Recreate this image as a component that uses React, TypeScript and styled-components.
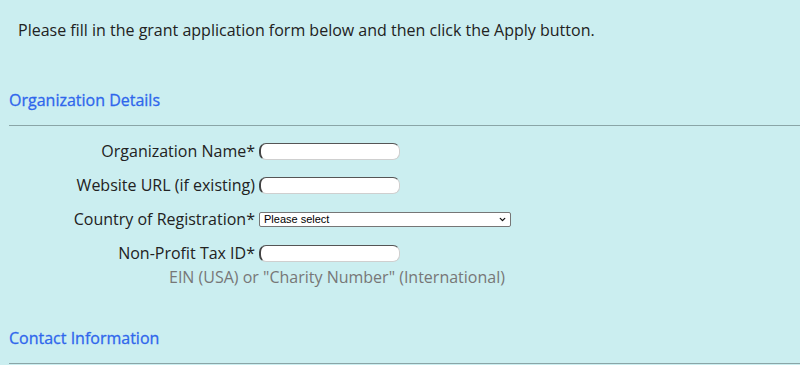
import React from "react";
import styled, { createGlobalStyle } from "styled-components";
import { ChevronDown } from "lucide-react";

const GlobalStyle = createGlobalStyle`
  html, body {
    margin: 0;
    padding: 0;
    background: #cbeef0;
  }
  body {
    font-family: "Open Sans", "DejaVu Sans", sans-serif;
    color: #222;
  }
`;

const Page = styled.div`
  padding: 18px 0 0 9px;
  width: 791px;
`;

const Intro = styled.p`
  margin: 0 0 0 9px;
  font-size: 16px;
  line-height: 24px;
`;

const SectionTitle = styled.h2<{ $top: number }>`
  margin: ${(p) => p.$top}px 0 0 0;
  font-size: 16px;
  font-weight: 400;
  line-height: 24px;
  color: #2f66ec;
  -webkit-text-stroke: 0.3px #2f66ec;
`;

const Rule = styled.hr`
  margin: 13px 0 0 0;
  border: none;
  border-top: 1px solid #8aa5a7;
`;

const Form = styled.div`
  display: flex;
  flex-direction: column;
  gap: 10px;
  margin-top: 13px;
`;

const Row = styled.div`
  display: grid;
  grid-template-columns: 246px auto;
  column-gap: 4px;
  align-items: center;
  height: 24px;
`;

const Label = styled.label`
  font-size: 16px;
  line-height: 24px;
  text-align: right;
  white-space: nowrap;
`;

const TextInput = styled.input`
  box-sizing: border-box;
  width: 141px;
  height: 17px;
  margin: 0;
  padding: 0 6px;
  background: #fff;
  border-style: solid;
  border-width: 1px 1px 1px 2px;
  border-top-color: #555;
  border-left-color: #444;
  border-right-color: #cfcfcf;
  border-bottom-color: #cfcfcf;
  border-radius: 7px;
  font-size: 12px;
  outline: none;
`;

const SelectWrap = styled.div`
  position: relative;
  width: 252px;
  height: 15px;
`;

const Select = styled.select`
  appearance: none;
  box-sizing: border-box;
  display: block;
  width: 100%;
  height: 100%;
  margin: 0;
  padding: 0 0 0 4px;
  background: #fff;
  border: 1px solid #767676;
  border-radius: 2px;
  font-family: "Liberation Sans", Arial, sans-serif;
  font-size: 11px;
  line-height: 13px;
  color: #000;
  outline: none;
`;

const Chevron = styled(ChevronDown)`
  position: absolute;
  right: 4px;
  top: 3px;
  pointer-events: none;
  color: #111;
`;

const Help = styled.div`
  margin: -10px 0 0 160px;
  font-size: 16px;
  line-height: 24px;
  color: #777;
`;

export default function App() {
  return (
    <>
      <GlobalStyle />
      <Page>
        <Intro>
          Please fill in the grant application form below and then click the Apply button.
        </Intro>

        <SectionTitle $top={46}>Organization Details</SectionTitle>
        <Rule />

        <Form>
          <Row>
            <Label>Organization Name*</Label>
            <TextInput type="text" />
          </Row>
          <Row>
            <Label>Website URL (if existing)</Label>
            <TextInput type="text" />
          </Row>
          <Row>
            <Label>Country of Registration*</Label>
            <SelectWrap>
              <Select defaultValue="">
                <option value="">Please select</option>
              </Select>
              <Chevron size={9} strokeWidth={3.5} />
            </SelectWrap>
          </Row>
          <Row>
            <Label>Non-Profit Tax ID*</Label>
            <TextInput type="text" />
          </Row>
          <Help>EIN (USA) or "Charity Number" (International)</Help>
        </Form>

        <SectionTitle $top={37}>Contact Information</SectionTitle>
        <Rule />
      </Page>
    </>
  );
}
